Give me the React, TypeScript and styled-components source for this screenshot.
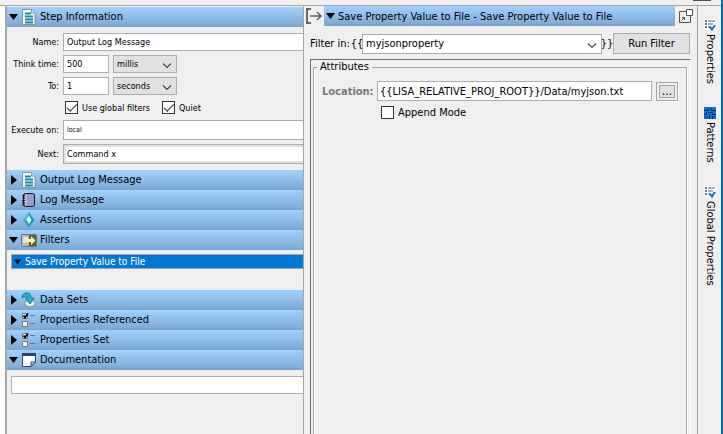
import React, { useState } from "react";
import styled, { createGlobalStyle, css } from "styled-components";

const GlobalStyle = createGlobalStyle`
  * { box-sizing: border-box; }
  body { margin: 0; background: #efefef; }
  body, button, input, select { font-family: "DejaVu Sans Condensed", "DejaVu Sans", sans-serif; font-size: 9px; color: #000; }
  button, input, select { margin: 0; border-radius: 0; outline: none; }
`;

const line = "#a5a5a5";
const fieldLine = "#abadb3";
const blueBar = "linear-gradient(#a0d2ff, #7ba6ce)";

const Window = styled.div`
  display: flex;
  flex-direction: column;
  height: 100vh;
  overflow: hidden;
  border-right: 2px solid #0067b8;
  background: #efefef;
`;

const TopStrip = styled.div`
  flex: 0 0 6px;
  display: flex;
  justify-content: flex-end;
  padding-right: 10px;
  border-bottom: 1px solid ${line};
  &::after { content: ""; width: 18px; height: 1px; background: #505050; }
`;

const Workspace = styled.div`
  flex: 1;
  min-height: 0;
  display: grid;
  grid-template-columns: 5px 299px minmax(0, 1fr) 24px;
`;

const Gutter = styled.div`
  background: #fff;
`;

const StepPanel = styled.aside`
  overflow: hidden;
  border-left: 2px solid ${line};
  border-right: 1px solid ${line};
  padding-top: 1px;
`;

const SectionHeader = styled.button`
  display: flex;
  align-items: center;
  width: 100%;
  height: 20px;
  padding: 0 2px;
  border: 0;
  background: ${blueBar};
  font-size: 11px;
  line-height: 20px;
  text-align: left;
  white-space: nowrap;
`;

const Arrow = styled.svg`
  flex: none;
  width: 10px;
  height: 10px;
`;

const SectionIcon = styled.svg`
  flex: none;
  width: 16px;
  height: 16px;
  margin: 0 3px 0 2px;
`;

const StepForm = styled.form`
  display: grid;
  grid-template-columns: 52px minmax(0, 1fr);
  column-gap: 4px;
  row-gap: 4px;
  align-items: center;
  padding: 6px 0;
`;

const FormLabel = styled.label`
  display: flex;
  justify-content: flex-end;
  white-space: nowrap;
`;

const controlBase = css`
  display: block;
  min-width: 0;
  border: 1px solid ${fieldLine};
  background: #fff;
`;

const WideInput = styled.input<{ $tall?: boolean; $small?: boolean }>`
  ${controlBase}
  width: 100%;
  height: ${(p) => (p.$tall ? 20 : 18)}px;
  padding: 0 3px;
  border-right: 0;
  font-size: ${(p) => (p.$small ? 7 : 9)}px;
`;

const NextSelect = styled.select`
  ${controlBase}
  appearance: none;
  width: 100%;
  height: 20px;
  padding: 0 3px;
  border-right: 0;
  box-shadow: inset 2px 2px #e1e1e1, inset 0 -2px #e1e1e1;
`;

const InlineRow = styled.div`
  display: flex;
  gap: 4px;
`;

const NumberInput = styled.input`
  ${controlBase}
  width: 46px;
  height: 18px;
  padding: 0 3px;
`;

const SelectWrap = styled.span<{ $wide?: boolean }>`
  display: grid;
  align-items: center;
  justify-items: end;
  ${(p) => (p.$wide ? "flex: 1; min-width: 0;" : "width: 64px;")}
  & > * { grid-area: 1 / 1; }
  & > svg { margin: 2px 5px 0 0; pointer-events: none; }
`;

const UnitSelect = styled.select`
  ${controlBase}
  appearance: none;
  width: 100%;
  height: 18px;
  padding: 0 3px;
  background: #e1e1e1;
`;

const CheckRow = styled.div`
  display: grid;
  grid-template-columns: 97px auto;
  padding-left: 2px;
`;

const CheckLabel = styled.label<{ $large?: boolean }>`
  display: flex;
  align-items: center;
  gap: 4px;
  height: 17px;
  font-size: ${(p) => (p.$large ? 11 : 9)}px;
  white-space: nowrap;
`;

const Check = styled.input`
  appearance: none;
  flex: none;
  display: grid;
  place-items: center;
  width: 13px;
  height: 13px;
  border: 1px solid #333;
  background: #fff;
  &:checked::after {
    content: "";
    width: 9px;
    height: 4px;
    border: solid #333;
    border-width: 0 0 1px 1px;
    transform: translateY(-1px) rotate(-45deg);
  }
`;

const FilterList = styled.div`
  height: 40px;
  padding: 4px 0 0 4px;
`;

const FilterItem = styled.button`
  display: flex;
  align-items: center;
  gap: 3px;
  width: 100%;
  height: 15px;
  padding: 0 2px;
  border: 1px solid ${line};
  border-right: 0;
  background: #0078d7;
  color: #fff;
  font-size: 10px;
  line-height: 13px;
  text-align: left;
  & > svg { width: 8px; height: 8px; }
`;

const DocArea = styled.div`
  padding: 6px 0 0 4px;
`;

const Editor = styled.main`
  display: flex;
  flex-direction: column;
  min-width: 0;
`;

const EditorHeader = styled.header`
  display: flex;
  align-items: center;
  height: 20px;
`;

const IconButton = styled.button<{ $wide?: boolean }>`
  flex: none;
  display: grid;
  place-items: center;
  width: ${(p) => (p.$wide ? 22 : 20)}px;
  height: 20px;
  padding: 0;
  border: 0;
  background: none;
`;

const EditorTitle = styled.button`
  flex: 1;
  min-width: 0;
  display: flex;
  align-items: center;
  gap: 2px;
  height: 20px;
  padding: 0 2px;
  border: 0;
  background: ${blueBar};
  font-size: 11px;
  white-space: nowrap;
`;

const FilterBar = styled.form`
  display: flex;
  align-items: center;
  padding: 7px 7px 5px 6px;
  font-size: 11px;
`;

const FilterLabel = styled.label`
  width: 42px;
  white-space: nowrap;
`;

const Braces = styled.span`
  display: flex;
  justify-content: center;
  width: 10px;
`;

const PropertySelect = styled.select`
  ${controlBase}
  appearance: none;
  width: 100%;
  height: 20px;
  padding: 0 3px;
  font-size: 11px;
`;

const RunButton = styled.button`
  width: 77px;
  height: 21px;
  margin-left: 1px;
  padding: 0;
  border: 1px solid ${fieldLine};
  background: #e1e1e1;
  font-size: 11px;
`;

const Frame = styled.div`
  flex: 1;
  display: flex;
  margin: 0 6px;
  padding: 0 3px 0 2px;
  border: solid #696969;
  border-width: 1px 0 0 1px;
  border-right: 1px solid #fff;
`;

const Attributes = styled.fieldset`
  flex: 1;
  min-width: 0;
  margin: 0;
  padding: 7px 8px 0 7px;
  border: 1px solid ${line};
  border-bottom: 0;
  box-shadow: 1px 0 #fff, inset 1px 0 #fff;
  font-size: 11px;
`;

const Legend = styled.legend`
  padding: 0 3px;
  margin-left: -4px;
  line-height: 14px;
`;

const AttributeRow = styled.div`
  display: flex;
  align-items: center;
`;

const LocationLabel = styled.label`
  width: 56px;
  padding-left: 1px;
  color: #787878;
  font-weight: bold;
  white-space: nowrap;
`;

const LocationInput = styled.input`
  ${controlBase}
  flex: 1;
  height: 20px;
  margin-right: 4px;
  padding: 0 2px;
  font-size: 11px;
`;

const BrowseButton = styled.button`
  width: 22px;
  height: 19px;
  padding: 0;
  border: 1px solid ${line};
  background: #e1e1e1;
  box-shadow: 1px 1px #fff, inset 0 0 0 2px #efefef, inset 0 0 0 3px ${line};
  color: #000040;
  font-size: 12px;
  line-height: 12px;
`;

const AppendRow = styled.div`
  padding: 3px 0 0 60px;
`;

const SideTabs = styled.nav`
  display: flex;
  flex-direction: column;
  gap: 23px;
  padding-top: 13px;
  border-left: 1px solid ${line};
`;

const SideTab = styled.button`
  display: flex;
  flex-direction: column;
  align-items: center;
  gap: 3px;
  padding: 0;
  border: 0;
  background: none;
  font-size: 11px;
  line-height: 14px;
  & > span { writing-mode: vertical-rl; }
`;

const Down = () => <Arrow viewBox="0 0 10 10"><path d="M0 2h9L4.5 8z" fill="#000" /></Arrow>;
const Right = () => <Arrow viewBox="0 0 10 10"><path d="M2 0l6 5-6 5z" fill="#000" /></Arrow>;

const Chevron = () => (
  <svg width="10" height="10" viewBox="0 0 10 10" fill="none" stroke="#444" strokeWidth="1.1">
    <path d="M1 3.5l4 4 4-4" />
  </svg>
);

const PageIcon = () => (
  <SectionIcon viewBox="0 0 16 16">
    <path d="M1.5 .5h9l3.500 3.500v11.500h-12.500z" fill="#f8fafb" stroke="#87919a" />
    <path d="M10.500 .5v3.500h3.500" fill="#d8dde1" stroke="#87919a" />
    <path d="M4 4.500h6M4 7.500h8M4 10.500h8M4 13.500h8" stroke="#108b9f" strokeWidth="1.800" />
  </SectionIcon>
);

const LogIcon = () => (
  <SectionIcon viewBox="0 0 16 16">
    <rect x="2.5" y="1.5" width="11" height="13" rx="2" fill="#9597c4" stroke="#16161c" />
    <path d="M5 2v12" stroke="#d0d0e8" />
    <path d="M1 3.500h3M1 6h3M1 8.500h3M1 11h3M1 13h3" stroke="#222" />
    <path d="M7 4h5M7 7h5M7 10h5" stroke="#aaaada" />
  </SectionIcon>
);

const AssertionIcon = () => (
  <SectionIcon viewBox="0 0 16 16">
    <path d="M8 .5L13.500 8 8 15.500 2.500 8z" fill="#159ab7" stroke="#4bb4cf" />
    <path d="M8 1L3 8l5 1z" fill="#5cc5dc" />
    <path d="M8 4l2.500 4L8 12 5.500 8z" fill="#fff" />
  </SectionIcon>
);

const FilterIcon = () => (
  <SectionIcon viewBox="0 0 16 16">
    <rect x=".5" y="2.500" width="15" height="12" rx="1" fill="#8b8b82" stroke="#74746c" />
    <path d="M1 3h7v11H1z" fill="#b8b8b4" />
    <path d="M2 5h5v6H2z" fill="#e2e2df" />
    <path d="M8 3h7v11H8z" fill="#606034" />
    <path d="M6 7h4V4l4.500 4.500L10 13v-3H6z" fill="#fff6a2" />
  </SectionIcon>
);

const DataIcon = () => (
  <SectionIcon viewBox="0 0 16 16">
    <path d="M4 10v4q5 3 10 0v-4q-5-3-10 0" fill="#c9d1d5" stroke="#7c8e96" />
    <ellipse cx="9" cy="11" rx="4.500" ry="2" fill="#eef3f5" />
    <path d="M1 6Q1 1 6 1q4 0 4 5h3l-4 6-5-6h3q0-2-2-2-2 0-4 2" fill="#28b1c8" stroke="#147f98" />
  </SectionIcon>
);

const PropertiesIcon = () => (
  <SectionIcon viewBox="0 0 16 16">
    <path d="M1.500 1.500h5v5h-5zM1.500 9.500h5v5h-5z" fill="#eee" stroke="#777" />
    <path d="M2.500 3.500l1.500 2L7 1.500" stroke="#000" strokeWidth="1.8" fill="none" />
    <path d="M9 3.500h5M9 11.500h5" stroke="#7070aa" />
  </SectionIcon>
);

const DocumentIcon = () => (
  <SectionIcon viewBox="0 0 16 16">
    <path d="M1.500 1.500h13v8.500l-4.500 4.500H1.500z" fill="#fff" stroke="#294181" />
    <path d="M1 1h14v3H1z" fill="#294181" />
    <path d="M10 14.500V10h4.500z" fill="#d8dce8" stroke="#294181" />
  </SectionIcon>
);

const ChecklistIcon = () => (
  <svg width="12" height="12" viewBox="0 0 12 12">
    <path d="M0 0h12v11H0z" fill="#fff" />
    <path d="M1 2h2M1 5h2M1 8h2" stroke="#174d86" strokeWidth="1.5" />
    <path d="M4 2h7M4 5h5M4 8h2" stroke="#8a949d" strokeWidth="1.3" />
    <path d="M5.500 7.500l2.500 3 3-4.500" fill="none" stroke="#1672ad" strokeWidth="2" />
  </svg>
);

const PatternIcon = () => (
  <svg width="12" height="12" viewBox="0 0 12 12">
    <path d="M0 0h12v12H0z" fill="#1672d5" />
    <path d="M0 3.500h4V1m3 0v2.500h5M2.500 5v2.500H0m4.500-2h4v2H12M5.500 8v4m3 0V9.500h2M1 10h2.500" stroke="#062b70" fill="none" />
  </svg>
);

type SectionProps = { title: string; icon: React.ReactNode; initiallyOpen?: boolean; children?: React.ReactNode };

function Section({ title, icon, initiallyOpen = false, children }: SectionProps) {
  const [open, setOpen] = useState(initiallyOpen);
  return (
    <section>
      <SectionHeader type="button" aria-expanded={open} onClick={() => setOpen(!open)}>
        {open ? <Down /> : <Right />}
        {icon}
        {title}
      </SectionHeader>
      {open && children}
    </section>
  );
}

export default function App() {
  return (
    <>
      <GlobalStyle />
      <Window>
        <TopStrip />
        <Workspace>
          <Gutter />
          <StepPanel>
            <Section title="Step Information" icon={<PageIcon />} initiallyOpen>
              <StepForm>
                <FormLabel htmlFor="name">Name:</FormLabel>
                <WideInput id="name" defaultValue="Output Log Message" />
                <FormLabel htmlFor="think">Think time:</FormLabel>
                <InlineRow>
                  <NumberInput id="think" defaultValue="500" />
                  <SelectWrap>
                    <UnitSelect aria-label="Think time unit"><option>millis</option></UnitSelect>
                    <Chevron />
                  </SelectWrap>
                </InlineRow>
                <FormLabel htmlFor="to">To:</FormLabel>
                <InlineRow>
                  <NumberInput id="to" defaultValue="1" />
                  <SelectWrap>
                    <UnitSelect aria-label="To unit"><option>seconds</option></UnitSelect>
                    <Chevron />
                  </SelectWrap>
                </InlineRow>
                <span />
                <CheckRow>
                  <CheckLabel><Check type="checkbox" defaultChecked />Use global filters</CheckLabel>
                  <CheckLabel><Check type="checkbox" defaultChecked />Quiet</CheckLabel>
                </CheckRow>
                <FormLabel htmlFor="execute">Execute on:</FormLabel>
                <WideInput id="execute" $tall $small defaultValue="local" />
                <FormLabel htmlFor="next">Next:</FormLabel>
                <NextSelect id="next"><option>Command x</option></NextSelect>
              </StepForm>
            </Section>
            <Section title="Output Log Message" icon={<PageIcon />} />
            <Section title="Log Message" icon={<LogIcon />} />
            <Section title="Assertions" icon={<AssertionIcon />} />
            <Section title="Filters" icon={<FilterIcon />} initiallyOpen>
              <FilterList>
                <FilterItem type="button"><Down />Save Property Value to File</FilterItem>
              </FilterList>
            </Section>
            <Section title="Data Sets" icon={<DataIcon />} />
            <Section title="Properties Referenced" icon={<PropertiesIcon />} />
            <Section title="Properties Set" icon={<PropertiesIcon />} />
            <Section title="Documentation" icon={<DocumentIcon />} initiallyOpen>
              <DocArea><WideInput aria-label="Documentation" /></DocArea>
            </Section>
          </StepPanel>
          <Editor>
            <EditorHeader>
              <IconButton type="button" aria-label="Collapse panel">
                <svg width="17" height="16" viewBox="0 0 17 16" fill="none" stroke="#666" strokeWidth="2">
                  <path d="M5 1H1v14h4" />
                  <path d="M4 8h11M11 4l4 4-4 4" strokeWidth="1.6" />
                </svg>
              </IconButton>
              <EditorTitle type="button"><Down />Save Property Value to File - Save Property Value to File</EditorTitle>
              <IconButton type="button" $wide aria-label="Open in window">
                <svg width="14" height="14" viewBox="0 0 14 14" fill="none" stroke="#555">
                  <path d="M7 2.5H.5v11h11V7" />
                  <path d="M7.5.5h6v6h-6z" fill="#fff" />
                  <path d="M2.500 11.500l3-3M3 8.500h2.500v2.500" />
                </svg>
              </IconButton>
            </EditorHeader>
            <FilterBar>
              <FilterLabel htmlFor="filter">Filter in:</FilterLabel>
              <Braces>{"{{"}</Braces>
              <SelectWrap $wide>
                <PropertySelect id="filter"><option>myjsonproperty</option></PropertySelect>
                <Chevron />
              </SelectWrap>
              <Braces>{"}}"}</Braces>
              <RunButton type="button">Run Filter</RunButton>
            </FilterBar>
            <Frame>
              <Attributes>
                <Legend>Attributes</Legend>
                <AttributeRow>
                  <LocationLabel htmlFor="location">Location:</LocationLabel>
                  <LocationInput id="location" defaultValue="{{LISA_RELATIVE_PROJ_ROOT}}/Data/myjson.txt" />
                  <BrowseButton type="button" aria-label="Browse">...</BrowseButton>
                </AttributeRow>
                <AppendRow>
                  <CheckLabel $large><Check type="checkbox" />Append Mode</CheckLabel>
                </AppendRow>
              </Attributes>
            </Frame>
          </Editor>
          <SideTabs>
            <SideTab type="button"><ChecklistIcon /><span>Properties</span></SideTab>
            <SideTab type="button"><PatternIcon /><span>Patterns</span></SideTab>
            <SideTab type="button"><ChecklistIcon /><span>Global Properties</span></SideTab>
          </SideTabs>
        </Workspace>
      </Window>
    </>
  );
}
